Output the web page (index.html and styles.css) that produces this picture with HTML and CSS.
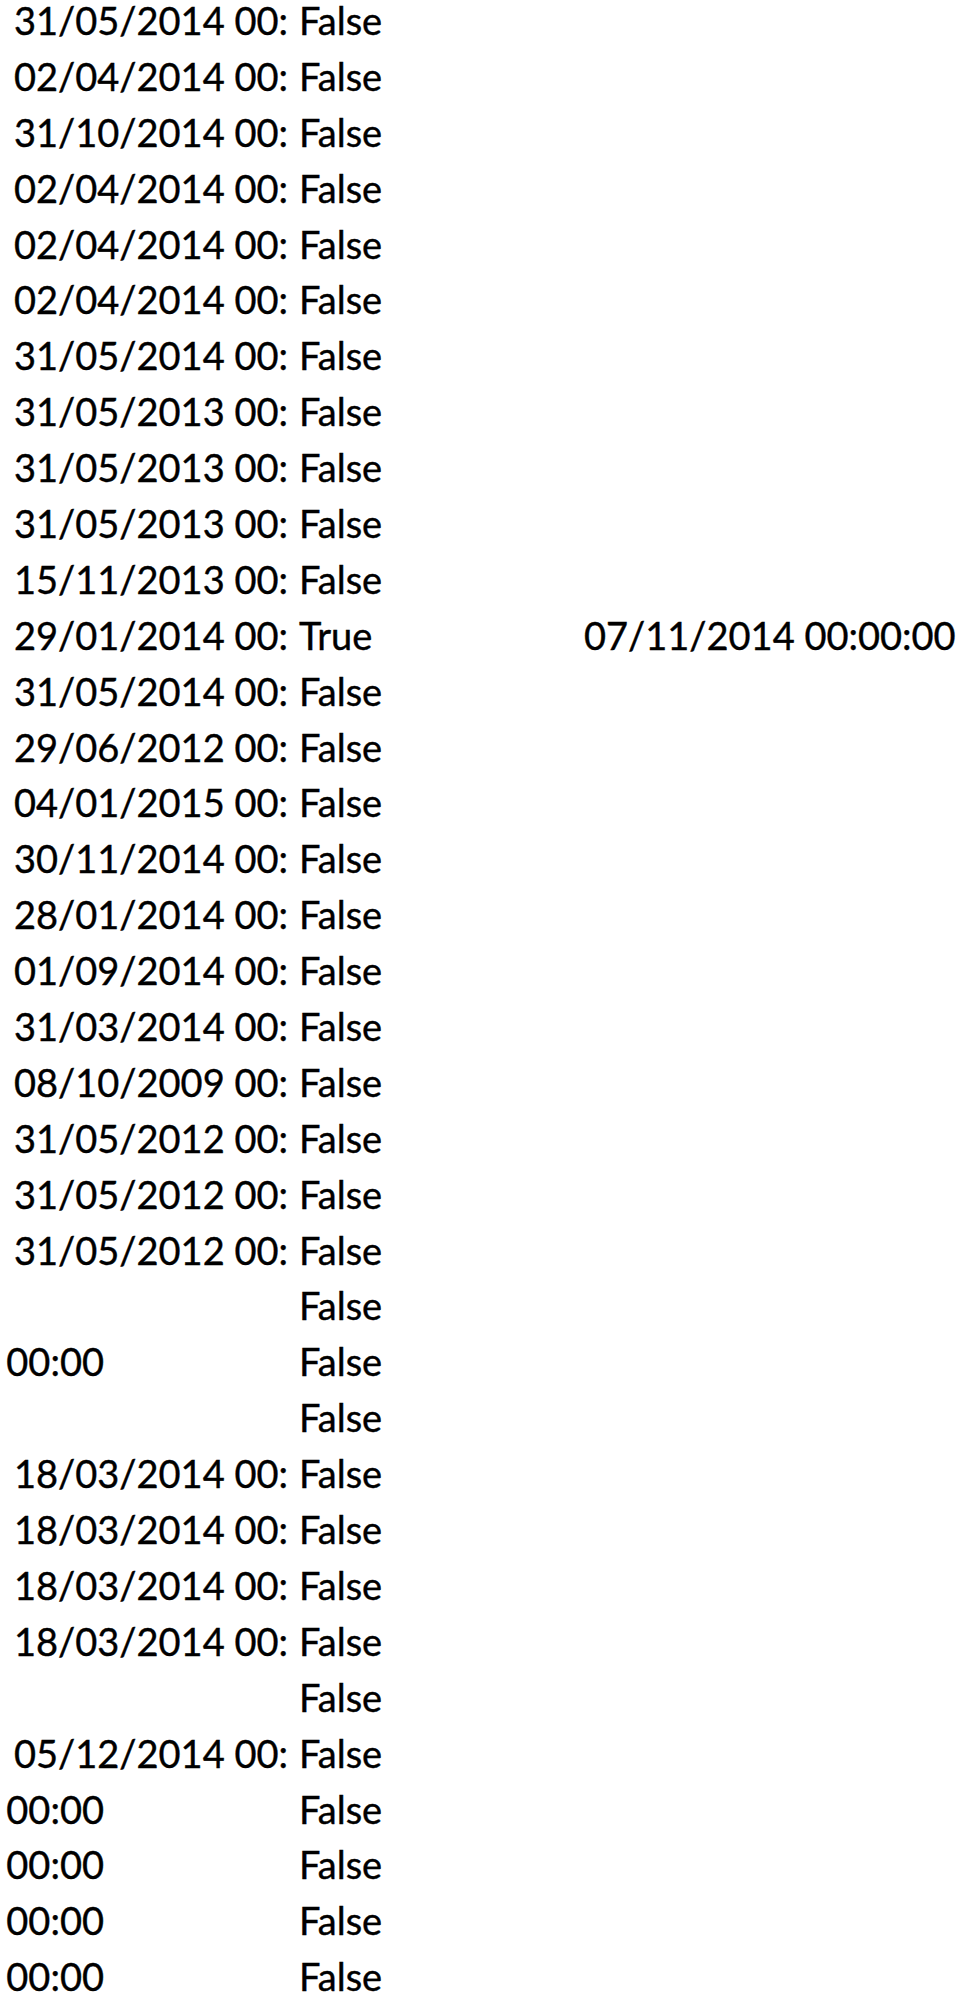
FILE: index.html
```html
<!DOCTYPE html>
<html lang="en">
  <head>
    <meta charset="UTF-8" />
    <meta name="viewport" content="width=device-width, initial-scale=1.0" />
    <title>Sheet</title>
    <link rel="stylesheet" href="styles.css">
  </head>
  <body>
    <div class="sheet">
      <div class="row"><div class="cell date">31/05/2014 00:00:00</div><div class="cell bool">False</div><div class="cell note"></div></div>
      <div class="row"><div class="cell date">02/04/2014 00:00:00</div><div class="cell bool">False</div><div class="cell note"></div></div>
      <div class="row"><div class="cell date">31/10/2014 00:00:00</div><div class="cell bool">False</div><div class="cell note"></div></div>
      <div class="row"><div class="cell date">02/04/2014 00:00:00</div><div class="cell bool">False</div><div class="cell note"></div></div>
      <div class="row"><div class="cell date">02/04/2014 00:00:00</div><div class="cell bool">False</div><div class="cell note"></div></div>
      <div class="row"><div class="cell date">02/04/2014 00:00:00</div><div class="cell bool">False</div><div class="cell note"></div></div>
      <div class="row"><div class="cell date">31/05/2014 00:00:00</div><div class="cell bool">False</div><div class="cell note"></div></div>
      <div class="row"><div class="cell date">31/05/2013 00:00:00</div><div class="cell bool">False</div><div class="cell note"></div></div>
      <div class="row"><div class="cell date">31/05/2013 00:00:00</div><div class="cell bool">False</div><div class="cell note"></div></div>
      <div class="row"><div class="cell date">31/05/2013 00:00:00</div><div class="cell bool">False</div><div class="cell note"></div></div>
      <div class="row"><div class="cell date">15/11/2013 00:00:00</div><div class="cell bool">False</div><div class="cell note"></div></div>
      <div class="row"><div class="cell date">29/01/2014 00:00:00</div><div class="cell bool">True</div><div class="cell note">07/11/2014 00:00:00</div></div>
      <div class="row"><div class="cell date">31/05/2014 00:00:00</div><div class="cell bool">False</div><div class="cell note"></div></div>
      <div class="row"><div class="cell date">29/06/2012 00:00:00</div><div class="cell bool">False</div><div class="cell note"></div></div>
      <div class="row"><div class="cell date">04/01/2015 00:00:00</div><div class="cell bool">False</div><div class="cell note"></div></div>
      <div class="row"><div class="cell date">30/11/2014 00:00:00</div><div class="cell bool">False</div><div class="cell note"></div></div>
      <div class="row"><div class="cell date">28/01/2014 00:00:00</div><div class="cell bool">False</div><div class="cell note"></div></div>
      <div class="row"><div class="cell date">01/09/2014 00:00:00</div><div class="cell bool">False</div><div class="cell note"></div></div>
      <div class="row"><div class="cell date">31/03/2014 00:00:00</div><div class="cell bool">False</div><div class="cell note"></div></div>
      <div class="row"><div class="cell date">08/10/2009 00:00:00</div><div class="cell bool">False</div><div class="cell note"></div></div>
      <div class="row"><div class="cell date">31/05/2012 00:00:00</div><div class="cell bool">False</div><div class="cell note"></div></div>
      <div class="row"><div class="cell date">31/05/2012 00:00:00</div><div class="cell bool">False</div><div class="cell note"></div></div>
      <div class="row"><div class="cell date">31/05/2012 00:00:00</div><div class="cell bool">False</div><div class="cell note"></div></div>
      <div class="row"><div class="cell date"></div><div class="cell bool">False</div><div class="cell note"></div></div>
      <div class="row"><div class="cell"><div class="tail">00:00</div></div><div class="cell bool">False</div><div class="cell note"></div></div>
      <div class="row"><div class="cell date"></div><div class="cell bool">False</div><div class="cell note"></div></div>
      <div class="row"><div class="cell date">18/03/2014 00:00:00</div><div class="cell bool">False</div><div class="cell note"></div></div>
      <div class="row"><div class="cell date">18/03/2014 00:00:00</div><div class="cell bool">False</div><div class="cell note"></div></div>
      <div class="row"><div class="cell date">18/03/2014 00:00:00</div><div class="cell bool">False</div><div class="cell note"></div></div>
      <div class="row"><div class="cell date">18/03/2014 00:00:00</div><div class="cell bool">False</div><div class="cell note"></div></div>
      <div class="row"><div class="cell date"></div><div class="cell bool">False</div><div class="cell note"></div></div>
      <div class="row"><div class="cell date">05/12/2014 00:00:00</div><div class="cell bool">False</div><div class="cell note"></div></div>
      <div class="row"><div class="cell"><div class="tail">00:00</div></div><div class="cell bool">False</div><div class="cell note"></div></div>
      <div class="row"><div class="cell"><div class="tail">00:00</div></div><div class="cell bool">False</div><div class="cell note"></div></div>
      <div class="row"><div class="cell"><div class="tail">00:00</div></div><div class="cell bool">False</div><div class="cell note"></div></div>
      <div class="row"><div class="cell"><div class="tail">00:00</div></div><div class="cell bool">False</div><div class="cell note"></div></div>
    </div>
  </body>
</html>
```

FILE: styles.css
```css
* {
  margin: 0;
  padding: 0;
  box-sizing: border-box;
}
body {
  font-family: Lato, "Open Sans", sans-serif;
  font-size: 38px;
  color: #000;
  background-color: #fff;
  overflow: hidden;
  -webkit-text-stroke: 0.4px #000;
}
.sheet {
  margin-top: -7px;
}
.row {
  display: grid;
  grid-template-columns: 287px 297px 1fr;
  height: 55.9px;
  line-height: 55.9px;
  white-space: nowrap;
}
.cell {
  overflow: hidden;
}
.date {
  padding-left: 14px;
}
.bool {
  padding-left: 12px;
}
.tail {
  display: flex;
  justify-content: flex-end;
  width: 104px;
  overflow: hidden;
}
```
